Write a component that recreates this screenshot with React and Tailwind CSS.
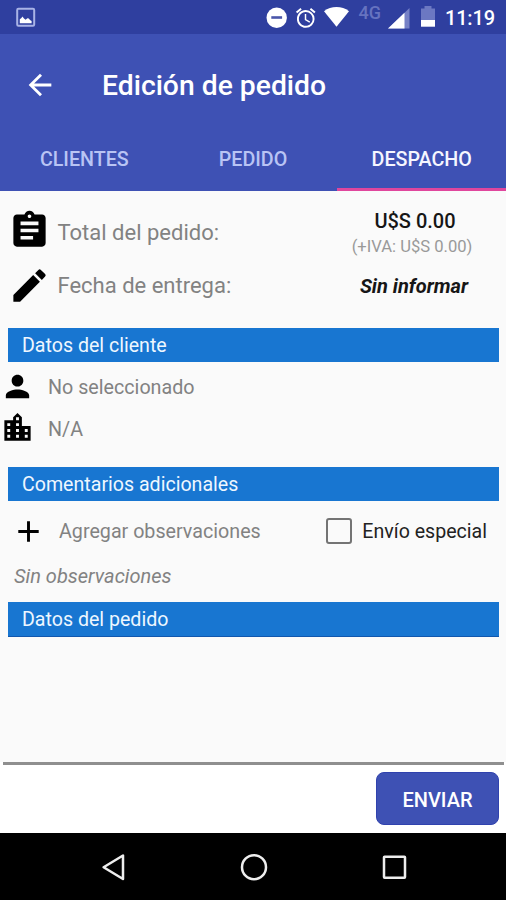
import { useState } from "react";
import {
  MdAdd,
  MdAlarm,
  MdArrowBack,
  MdAssignment,
  MdEdit,
  MdLocationCity,
  MdPerson,
} from "react-icons/md";

const tabs = ["CLIENTES", "PEDIDO", "DESPACHO"];

function StatusBar() {
  return (
    <div className="flex h-[34px] items-center bg-[#2f3f9f] pl-4 text-white">
      <svg width="20" height="20" viewBox="0 0 20 20">
        <rect x="1.2" y="1.7" width="17" height="17" rx="1.2" fill="none" stroke="#a9b3e6" strokeWidth="2" />
        <path d="M3.8 16.3v-4l1.6-1.3 1-1.6 1.6 2.1 1.6 1.3 1.8-1.5 1.4.3 1.2 1.3 1.6 1v2.4z" fill="#fff" />
      </svg>
      <div className="flex-1" />
      <svg width="240" height="34" viewBox="266 0 240 34">
        {/* Do not disturb */}
        <circle cx="276.7" cy="17.8" r="10.2" fill="#fff" />
        <rect x="271.3" y="16.2" width="10.8" height="2.6" fill="#4a56aa" />
        <MdAlarm x="294" y="6.2" size={23.5} color="#fff" />
        {/* Wifi */}
        <path d="M324 11.3C331 5.7 342 5.7 349 11.3L336.5 26.8z" fill="#fff" />
        <text x="358.5" y="19" fontSize="18" fontWeight="500" fill="#6673c0" className="font-['Roboto',sans-serif]">
          4G
        </text>
        {/* Mobile signal */}
        <path d="M388 28.5L409.5 8v20.5z" fill="#7681c6" />
        <path d="M388 28.5L404.5 12.8v15.7z" fill="#fff" />
        {/* Battery */}
        <path d="M421 8.5h3.5V6h7v2.5h3.5V20h-14z" fill="#6c78c2" />
        <path d="M421 20h14v6.7h-14z" fill="#fff" />
        <text x="445" y="25.3" fontSize="20" fontWeight="500" fill="#fff" textLength="50" className="font-['Roboto',sans-serif]">
          11:19
        </text>
      </svg>
    </div>
  );
}

function SectionTitle({ children }) {
  return (
    <h2 className="mr-[7px] ml-2 flex h-[34px] items-center bg-[#1876d1] pt-[2px] pl-[14px] text-[19.6px] text-[#eef7ff]">
      {children}
    </h2>
  );
}

export default function App() {
  const [activeTab, setActiveTab] = useState("DESPACHO");
  const [special, setSpecial] = useState(false);

  return (
    <div className="flex h-[900px] w-[506px] flex-col overflow-hidden bg-[#fafafa] font-['Roboto',sans-serif] text-[#828282]">
      <StatusBar />

      {/* Header */}
      <header className="bg-[#3e51b4] text-white">
        <div className="flex h-[92px] items-center pt-[10px] pl-[23px]">
          <MdArrowBack size={34} />
          <h1 className="ml-[45px] pt-[2px] text-[28.3px] font-medium">Edición de pedido</h1>
        </div>
        <nav className="flex h-[65px]">
          {tabs.map((tab) => (
            <button
              key={tab}
              className={`flex-1 border-b-3 pt-[6px] text-[19.7px] font-medium ${
                tab === activeTab
                  ? "border-[#e0469d] text-[#f5f6ff]"
                  : "border-[#3e51b4] text-[#b9c4f4]"
              }`}
              onClick={() => setActiveTab(tab)}
            >
              {tab}
            </button>
          ))}
        </nav>
      </header>

      {/* Order summary */}
      <main className="flex-1 pt-[18px]">
        <div className="flex h-[43px] items-center pl-[7.5px]">
          <MdAssignment size={43} color="#000" />
          <span className="ml-[7px] pt-[3px] text-[22px]">Total del pedido:</span>
          <div className="mr-[15px] ml-auto w-[152px] pt-[5px] text-center">
            <p className="text-[20px] leading-[26px] font-medium text-[#161616]">U$S 0.00</p>
            <p className="mr-[6px] text-[16.6px] leading-[25px] text-[#999]">(+IVA: U$S 0.00)</p>
          </div>
        </div>
        <div className="mt-[12px] flex h-[43px] items-center pl-[7.5px]">
          <MdEdit size={43} color="#000" />
          <span className="ml-[7px] text-[22px]">Fecha de entrega:</span>
          <span className="mr-[16px] ml-auto w-[152px] text-center text-[20px] font-bold text-[#161616] italic">
            Sin informar
          </span>
        </div>

        <div className="h-[21px]" />
        <SectionTitle>Datos del cliente</SectionTitle>
        <div className="mt-[7px] flex h-[35px] items-center">
          <MdPerson size={35} color="#000" />
          <span className="ml-[13px] pt-[3px] text-[19.7px]">No seleccionado</span>
        </div>
        <div className="mt-[6px] flex h-[35px] items-center">
          <MdLocationCity size={35} color="#000" />
          <span className="ml-[13px] pt-[4px] text-[19.7px]">N/A</span>
        </div>

        <div className="h-[22px]" />
        <SectionTitle>Comentarios adicionales</SectionTitle>
        <div className="flex h-[61px] items-center pl-[11px]">
          <MdAdd size={35} color="#000" />
          <span className="ml-[13px] pt-px text-[19.7px]">Agregar observaciones</span>
          <label className="mr-[19px] ml-auto flex items-center text-[19.6px] text-[#222]">
            <input
              type="checkbox"
              className="mr-[10px] size-[26px] appearance-none rounded-[3px] border-[2.5px] border-[#747474] checked:bg-[#3e51b4]"
              checked={special}
              onChange={(e) => setSpecial(e.target.checked)}
            />
            <span className="pt-px">Envío especial</span>
          </label>
        </div>
        <p className="h-[40px] pl-[14px] text-[20px] leading-[28px] italic">Sin observaciones</p>
        <SectionTitle>Datos del pedido</SectionTitle>
        <div className="mr-[7px] ml-2 h-px bg-[#1157ad]" />
      </main>

      {/* Submit */}
      <footer className="flex h-[71px] flex-col bg-white">
        <div className="mr-[2px] ml-[3px] h-[3px] bg-[#8f8f8f]" />
        <button className="mt-[7px] mr-[7px] flex h-[53px] w-[123px] items-center justify-center self-end rounded-[8px] border border-[#3042ae] bg-[#3e51b4] pt-[3px] text-[20px] font-medium text-white">
          ENVIAR
        </button>
      </footer>

      {/* System navigation */}
      <div className="flex h-[67px] justify-center gap-[112px] bg-black pt-[20px] pl-[2px]">
        <svg width="28" height="28" viewBox="0 0 28 28" fill="none" stroke="#eee" strokeWidth="2.5">
          <path d="M23 2.5v23.5L3.6 14.2z" strokeLinejoin="round" />
        </svg>
        <svg width="28" height="28" viewBox="0 0 28 28" fill="none" stroke="#eee" strokeWidth="2.5">
          <circle cx="14" cy="14.2" r="12" />
        </svg>
        <svg width="28" height="28" viewBox="0 0 28 28" fill="none" stroke="#eee" strokeWidth="2.5">
          <rect x="4" y="3.7" width="21" height="21" rx="0.6" />
        </svg>
      </div>
    </div>
  );
}
